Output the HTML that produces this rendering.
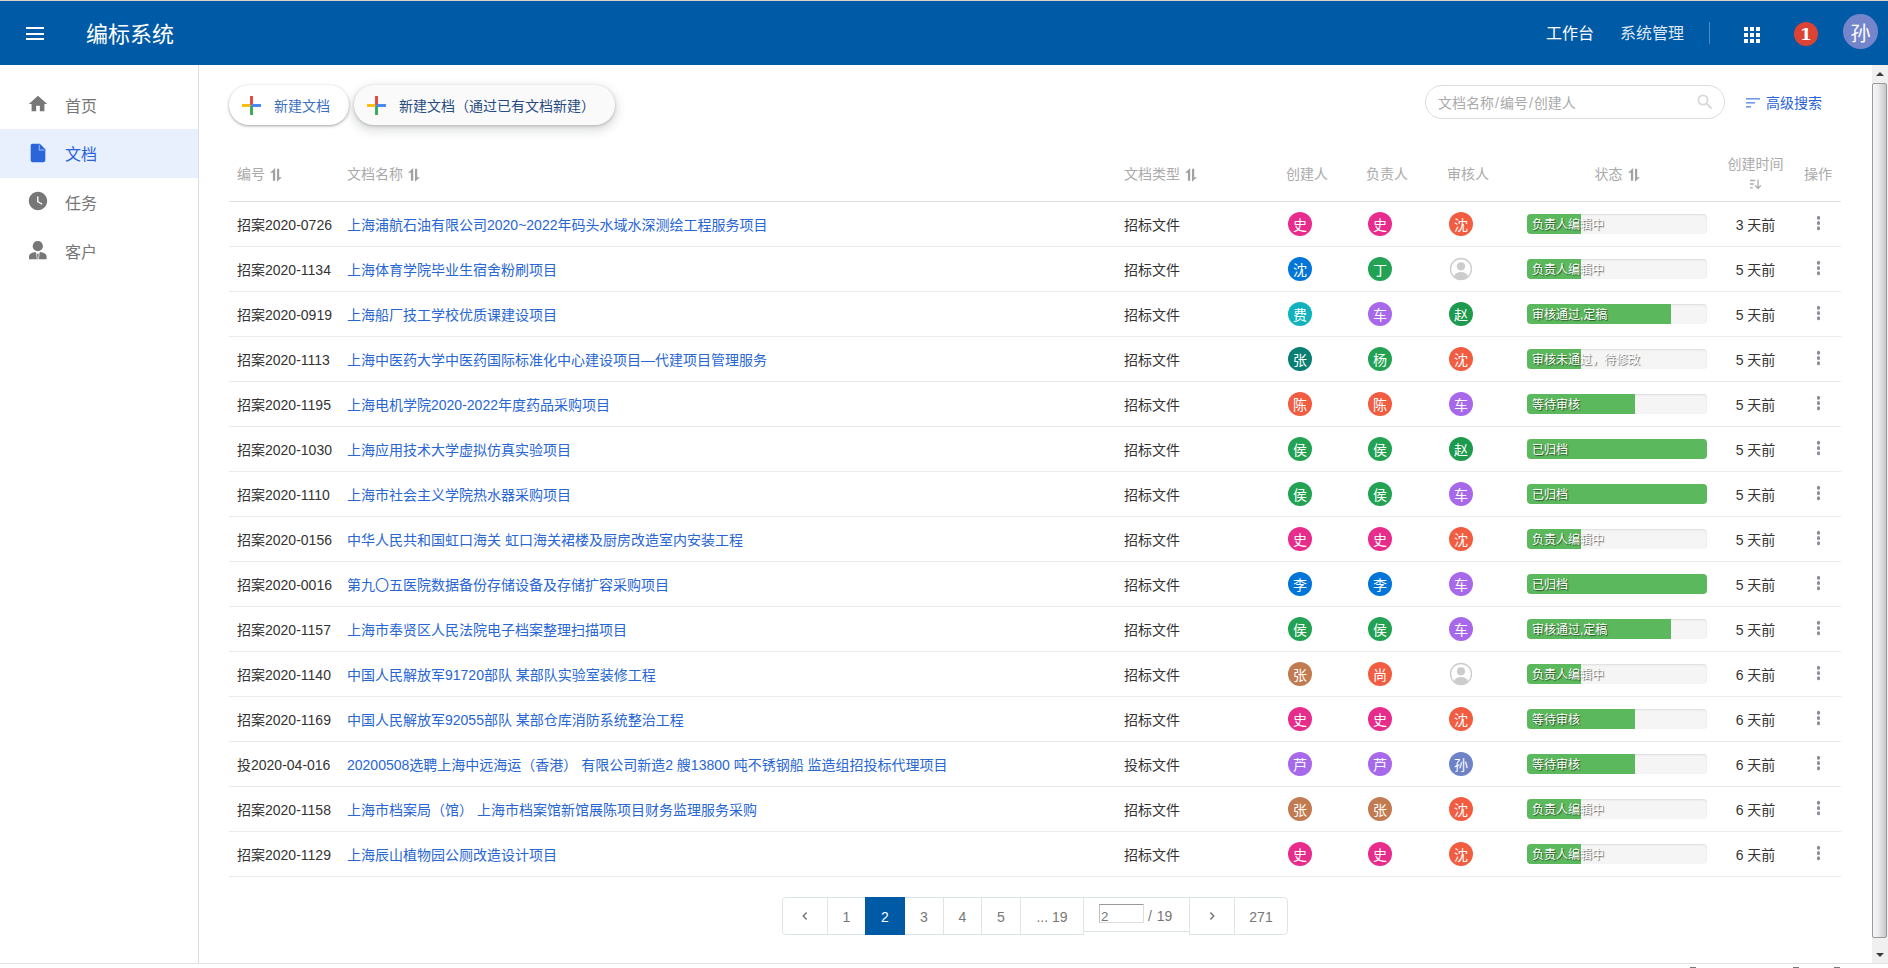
<!DOCTYPE html>
<html lang="zh-CN">
<head>
<meta charset="utf-8">
<title>编标系统</title>
<style>
*{box-sizing:border-box}
html,body{margin:0;padding:0}
body{width:1888px;height:968px;overflow:hidden;position:relative;background:#fff;font-family:"Liberation Sans","Noto Sans CJK SC",sans-serif;font-size:14px;color:#333;line-height:20px}
a{text-decoration:none;color:#2866d4}
.topline{position:absolute;left:0;top:0;width:1888px;height:1px;background:#d8d0c6;z-index:5}
.hdr{position:absolute;left:0;top:0;width:1888px;height:65px;background:#005aa6;color:#fff}
.burger{position:absolute;left:26px;top:27px;width:18px;height:13px}
.burger i{display:block;height:2px;background:#fff;margin-bottom:3.5px}
.title{position:absolute;left:86px;top:18px;font-size:22px;line-height:34px;white-space:nowrap}
.nav1{position:absolute;left:1546px;top:22px;font-size:16px;line-height:24px}
.nav2{position:absolute;left:1620px;top:22px;font-size:16px;line-height:24px;color:rgba(255,255,255,.88)}
.vdiv{position:absolute;left:1709px;top:22px;width:1px;height:22px;background:rgba(255,255,255,.3)}
.grid{position:absolute;left:1744px;top:27px;width:16px;height:16px}
.badge{position:absolute;left:1794px;top:22px;width:24px;height:24px;border-radius:50%;background:#dc4334;color:#fff;font-weight:bold;font-family:"DejaVu Serif","Liberation Serif",serif;font-size:17px;line-height:24px;text-align:center}
.me{position:absolute;left:1843px;top:14px;width:35px;height:35px;border-radius:50%;background:#7585cc;color:#fff;font-size:20px;line-height:40px;text-align:center}
.side{position:absolute;left:0;top:65px;width:199px;height:898px;border-right:1px solid #ddd;background:#fff}
.side .it{position:absolute;left:0;width:198px;height:49px;font-size:16px;line-height:49px;color:#777}
.side .it span{position:absolute;left:65px;top:1px}
.side .it svg{position:absolute;left:27px;top:13px}
.side .it.on{background:#e8f0fe;color:#2a63d6}
.bl1{position:absolute;top:967px;width:6px;height:1px;background:#777}
.botline{position:absolute;left:0;top:963px;width:1888px;height:1px;background:#e4e4e4}
.sb{position:absolute;left:1872px;top:65px;width:16px;height:898px;background:#f0f0f0}
.sb .th{position:absolute;left:0;top:18px;width:15px;height:855px;border:1px solid #9a9a9a;border-radius:2px;background:linear-gradient(90deg,#f6f6f6 0,#ececee 40%,#c6c6ca 100%)}
.sb .up{position:absolute;left:4px;top:7px;width:0;height:0;border:4px solid transparent;border-top:0;border-bottom:4px solid #3a3a3a}
.sb .dn{position:absolute;left:4px;top:888px;width:0;height:0;border:4px solid transparent;border-bottom:0;border-top:4px solid #3a3a3a}
.btn{position:absolute;top:85px;height:40px;border-radius:20px;background:#fff;box-shadow:0 1px 2px rgba(60,64,67,.3),0 1px 3px 1px rgba(60,64,67,.15);font-size:14px;line-height:40px;white-space:nowrap}
.btn svg{position:absolute;left:13px;top:11px}
.btn span{position:absolute;left:45px;top:1px}
.b1{left:229px;width:120px;color:#3d6fbe}
.b2{left:354px;width:261px;color:#284b80;background:#fafafb;box-shadow:0 1px 3px rgba(60,64,67,.3),0 4px 8px 3px rgba(60,64,67,.15)}
.search{position:absolute;left:1425px;top:85px;width:300px;height:34px;border:1px solid #ddd;border-radius:17px;color:#aaa;font-size:14px;line-height:34px;padding-left:12px}
.search b{font-weight:normal;padding:0 1px}
.search svg{position:absolute;left:271px;top:8px}
.adv{position:absolute;left:1746px;top:93px;color:#2b62d9;font-size:14px;line-height:20px;white-space:nowrap}
.adv svg{position:absolute;left:0;top:5px}
.adv span{position:absolute;left:20px;top:0}
table{position:absolute;left:229px;top:146px;width:1612px;border-collapse:collapse;table-layout:fixed}
th{height:55px;padding:2px 8px 0;font-weight:normal;color:#aaa;text-align:left;border-bottom:1px solid #dde0e6;vertical-align:middle;white-space:nowrap}
td{height:45px;padding:2px 8px 0;border-bottom:1px solid #ebebeb;vertical-align:middle;white-space:nowrap;overflow:hidden}
th svg.st{vertical-align:-3px;margin-left:5px}
.c7h,.c8h{text-align:center}
td.c8{text-align:center}
td.c9{text-align:center}
.av{position:relative;top:-1px;display:inline-block;width:24px;height:24px;border-radius:50%;color:#fff;font-size:14px;line-height:26px;text-align:center;vertical-align:middle;margin-left:2px}
.av.none{background:none}
.av svg{display:block}
.pk{background:#e82c8c}.or{background:#f25c40}.bl{background:#0275d8}.gr{background:#23a254}.dg{background:#1e9a4e}
.tl{background:#0fb2bd}.pu{background:#a768ea}.dt{background:#087f72}.br{background:#c27a50}.sb2{background:#6e82c8}
.pg{position:relative;top:-1px;width:180px;height:20px;background:#f5f5f5;border-radius:4px;box-shadow:inset 0 1px 2px rgba(0,0,0,.1);overflow:hidden}
.pb{height:20px;background:#5cb85c;color:#fff;font-size:12px;line-height:23px;white-space:nowrap;text-shadow:1px 1px 1px rgba(0,0,0,.58)}
.pb span{padding-left:5px}
.dots{position:relative;top:-3px;display:inline-block;width:3.600px;height:3.600px;border-radius:50%;background:#8c8c9c;box-shadow:0 -5.200px 0 #8c8c9c,0 5.200px 0 #8c8c9c;vertical-align:middle}
.pgn{position:absolute;left:782px;top:897px;height:38px;color:#777;font-size:14px;line-height:20px}
.pc{position:absolute;top:0;height:38px;border:1px solid #dee5e7;background:#fff;text-align:center;padding-top:9px;white-space:nowrap}
.pc.first{border-radius:4px 0 0 4px}.pc.last{border-radius:0 4px 4px 0}
.pc.on{background:#005aa6;border-color:#005aa6;color:#fff;z-index:2}
.pc svg{display:block;margin:5px auto 0}
.pc.inp{height:35px;padding:0}
.ibox{position:absolute;left:15px;top:6px;width:45px;height:19px;border:1px solid #ddd;border-top-color:#999;border-left-color:#c0c0c0;font-size:13.300px;line-height:23px;text-align:left;padding-left:1px;color:#777;overflow:hidden}
.itxt{position:absolute;left:64px;top:8px;word-spacing:1px}
</style>
</head>
<body>
<div class="hdr">
  <div class="burger"><i></i><i></i><i></i></div>
  <div class="title">编标系统</div>
  <div class="nav1">工作台</div>
  <div class="nav2">系统管理</div>
  <div class="vdiv"></div>
  <svg class="grid" viewBox="0 0 16 16"><g fill="#fff"><rect x="0" y="0" width="4" height="4"/><rect x="6" y="0" width="4" height="4"/><rect x="12" y="0" width="4" height="4"/><rect x="0" y="6" width="4" height="4"/><rect x="6" y="6" width="4" height="4"/><rect x="12" y="6" width="4" height="4"/><rect x="0" y="12" width="4" height="4"/><rect x="6" y="12" width="4" height="4"/><rect x="12" y="12" width="4" height="4"/></g></svg>
  <div class="badge">1</div>
  <div class="me">孙</div>
</div>
<div class="topline"></div>
<div class="side">
  <div class="it" style="top:16px"><svg style="top:12.300px" width="22" height="22" viewBox="0 0 24 24"><path fill="#777" d="M10 20v-6h4v6h5v-8h3L12 3 2 12h3v8z"/></svg><span>首页</span></div>
  <div class="it on" style="top:64px"><svg width="22" height="22" viewBox="0 0 24 24"><path fill="#2a66d9" d="M6 2c-1.100 0-2 .900-2 2v16c0 1.100.900 2 2 2h12c1.100 0 2-.900 2-2V8l-6-6H6z"/><path d="M13.400 3v5.600H19" fill="none" stroke="#9dbcf3" stroke-width="1.100"/></svg><span>文档</span></div>
  <div class="it" style="top:113px"><svg style="top:12.400px" width="22" height="22" viewBox="0 0 24 24"><path fill="#777" d="M12 2C6.500 2 2 6.500 2 12s4.500 10 10 10 10-4.500 10-10S17.500 2 12 2zm4.200 14.200L11 13V7h1.500v5.200l4.500 2.700-.8 1.300z"/></svg><span>任务</span></div>
  <div class="it" style="top:162px"><svg style="top:11px" width="22" height="24" viewBox="0 0 22 24"><circle cx="10.800" cy="8.200" r="5.100" fill="#777"/><path fill="#777" d="M2 21.200V18.600C2 15.900 5.400 14.500 8.300 14.100L10.800 16.200L13.300 14.100C16.200 14.500 19.600 15.900 19.600 18.600V21.200Z"/><path d="M9.300 14.800L10.200 21.200M12.300 14.800L11.400 21.200" stroke="#fff" stroke-width=".700" fill="none"/></svg><span>客户</span></div>
</div>
<div class="btn b1"><svg width="19" height="19" viewBox="0 0 20 20"><rect x="8.500" y="0" width="3" height="10" fill="#ea4335"/><rect x="8.500" y="10" width="3" height="10" fill="#34a853"/><rect x="0" y="8.500" width="8.500" height="3" fill="#fbbc05"/><rect x="10" y="8.500" width="10" height="3" fill="#4285f4"/></svg><span>新建文档</span></div>
<div class="btn b2"><svg width="19" height="19" viewBox="0 0 20 20"><rect x="8.500" y="0" width="3" height="10" fill="#ea4335"/><rect x="8.500" y="10" width="3" height="10" fill="#34a853"/><rect x="0" y="8.500" width="8.500" height="3" fill="#fbbc05"/><rect x="10" y="8.500" width="10" height="3" fill="#4285f4"/></svg><span>新建文档（通过已有文档新建）</span></div>
<div class="search">文档名称<b>/</b>编号<b>/</b>创建人<svg width="16" height="16" viewBox="0 0 16 16"><g fill="none" stroke="#d8d8d8" stroke-width="1.800"><circle cx="6" cy="6" r="4.600"/><path d="M9.400 9.400L14.500 14.500"/></g></svg></div>
<div class="adv"><svg width="14" height="10" viewBox="0 0 14 10"><g fill="#6f9af0"><rect x="0" y="0" width="14" height="1.600"/><rect x="0" y="4" width="9" height="1.600"/><rect x="0" y="8" width="5" height="1.600"/></g></svg><span>高级搜索</span></div>
<table>
<colgroup><col style="width:110px"><col style="width:777px"><col style="width:162px"><col style="width:80px"><col style="width:81px"><col style="width:80px"><col style="width:196px"><col style="width:81px"><col style="width:45px"></colgroup>
<thead><tr>
<th>编号<svg class="st" width="12" height="14" viewBox="0 0 12 14"><g fill="#a2a2a2"><path d="M5.200 0L0 4.700H2.900V12.700H5.200z"/><path d="M7 0.800H9.200V9.200H11.900L7 13.700z"/></g></svg></th>
<th>文档名称<svg class="st" width="12" height="14" viewBox="0 0 12 14"><g fill="#a2a2a2"><path d="M5.200 0L0 4.700H2.900V12.700H5.200z"/><path d="M7 0.800H9.200V9.200H11.900L7 13.700z"/></g></svg></th>
<th>文档类型<svg class="st" width="12" height="14" viewBox="0 0 12 14"><g fill="#a2a2a2"><path d="M5.200 0L0 4.700H2.900V12.700H5.200z"/><path d="M7 0.800H9.200V9.200H11.900L7 13.700z"/></g></svg></th>
<th>创建人</th><th>负责人</th><th>审核人</th>
<th class="c7h">状态<svg class="st" width="12" height="14" viewBox="0 0 12 14"><g fill="#a2a2a2"><path d="M5.200 0L0 4.700H2.900V12.700H5.200z"/><path d="M7 0.800H9.200V9.200H11.900L7 13.700z"/></g></svg></th>
<th class="c8h">创建时间<br><svg width="11" height="10" viewBox="0 0 11 10"><g fill="none" stroke="#adadad" stroke-width="1.300"><path d="M0 1.500h5.200M0 5h3.800M0 8.800h2.800M8 0.500v9M5.200 6.400L8 9.500l2.800-3.100"/></g></svg></th>
<th>操作</th>
</tr></thead>
<tbody>
<tr><td class="c1">招案2020-0726</td><td class="c2"><a>上海浦航石油有限公司2020~2022年码头水域水深测绘工程服务项目</a></td><td class="c3">招标文件</td><td class="c4"><span class="av pk">史</span></td><td class="c5"><span class="av pk">史</span></td><td class="c6"><span class="av or">沈</span></td><td class="c7"><div class="pg"><div class="pb" style="width:30%"><span>负责人编辑中</span></div></div></td><td class="c8">3 天前</td><td class="c9"><i class="dots"></i></td></tr>
<tr><td class="c1">招案2020-1134</td><td class="c2"><a>上海体育学院毕业生宿舍粉刷项目</a></td><td class="c3">招标文件</td><td class="c4"><span class="av bl">沈</span></td><td class="c5"><span class="av gr">丁</span></td><td class="c6"><span class="av none"><svg viewBox="0 0 24 24" width="24" height="24"><circle cx="12" cy="12" r="10.500" fill="#fff" stroke="#ccc" stroke-width="1.300"/><circle cx="12" cy="9.3" r="4.1" fill="#ccc"/><path d="M5 19.400c1.200-3 3.800-4.300 7-4.300s5.800 1.300 7 4.300A10.200 10.200 0 0 1 12 22.200 10.200 10.200 0 0 1 5 19.400z" fill="#ccc"/></svg></span></td><td class="c7"><div class="pg"><div class="pb" style="width:30%"><span>负责人编辑中</span></div></div></td><td class="c8">5 天前</td><td class="c9"><i class="dots"></i></td></tr>
<tr><td class="c1">招案2020-0919</td><td class="c2"><a>上海船厂技工学校优质课建设项目</a></td><td class="c3">招标文件</td><td class="c4"><span class="av tl">费</span></td><td class="c5"><span class="av pu">车</span></td><td class="c6"><span class="av dg">赵</span></td><td class="c7"><div class="pg"><div class="pb" style="width:80%"><span>审核通过,定稿</span></div></div></td><td class="c8">5 天前</td><td class="c9"><i class="dots"></i></td></tr>
<tr><td class="c1">招案2020-1113</td><td class="c2"><a>上海中医药大学中医药国际标准化中心建设项目—代建项目管理服务</a></td><td class="c3">招标文件</td><td class="c4"><span class="av dt">张</span></td><td class="c5"><span class="av gr">杨</span></td><td class="c6"><span class="av or">沈</span></td><td class="c7"><div class="pg"><div class="pb" style="width:30%"><span>审核未通过，待修改</span></div></div></td><td class="c8">5 天前</td><td class="c9"><i class="dots"></i></td></tr>
<tr><td class="c1">招案2020-1195</td><td class="c2"><a>上海电机学院2020-2022年度药品采购项目</a></td><td class="c3">招标文件</td><td class="c4"><span class="av or">陈</span></td><td class="c5"><span class="av or">陈</span></td><td class="c6"><span class="av pu">车</span></td><td class="c7"><div class="pg"><div class="pb" style="width:60%"><span>等待审核</span></div></div></td><td class="c8">5 天前</td><td class="c9"><i class="dots"></i></td></tr>
<tr><td class="c1">招案2020-1030</td><td class="c2"><a>上海应用技术大学虚拟仿真实验项目</a></td><td class="c3">招标文件</td><td class="c4"><span class="av gr">侯</span></td><td class="c5"><span class="av gr">侯</span></td><td class="c6"><span class="av dg">赵</span></td><td class="c7"><div class="pg"><div class="pb" style="width:100%"><span>已归档</span></div></div></td><td class="c8">5 天前</td><td class="c9"><i class="dots"></i></td></tr>
<tr><td class="c1">招案2020-1110</td><td class="c2"><a>上海市社会主义学院热水器采购项目</a></td><td class="c3">招标文件</td><td class="c4"><span class="av gr">侯</span></td><td class="c5"><span class="av gr">侯</span></td><td class="c6"><span class="av pu">车</span></td><td class="c7"><div class="pg"><div class="pb" style="width:100%"><span>已归档</span></div></div></td><td class="c8">5 天前</td><td class="c9"><i class="dots"></i></td></tr>
<tr><td class="c1">招案2020-0156</td><td class="c2"><a>中华人民共和国虹口海关 虹口海关裙楼及厨房改造室内安装工程</a></td><td class="c3">招标文件</td><td class="c4"><span class="av pk">史</span></td><td class="c5"><span class="av pk">史</span></td><td class="c6"><span class="av or">沈</span></td><td class="c7"><div class="pg"><div class="pb" style="width:30%"><span>负责人编辑中</span></div></div></td><td class="c8">5 天前</td><td class="c9"><i class="dots"></i></td></tr>
<tr><td class="c1">招案2020-0016</td><td class="c2"><a>第九〇五医院数据备份存储设备及存储扩容采购项目</a></td><td class="c3">招标文件</td><td class="c4"><span class="av bl">李</span></td><td class="c5"><span class="av bl">李</span></td><td class="c6"><span class="av pu">车</span></td><td class="c7"><div class="pg"><div class="pb" style="width:100%"><span>已归档</span></div></div></td><td class="c8">5 天前</td><td class="c9"><i class="dots"></i></td></tr>
<tr><td class="c1">招案2020-1157</td><td class="c2"><a>上海市奉贤区人民法院电子档案整理扫描项目</a></td><td class="c3">招标文件</td><td class="c4"><span class="av gr">侯</span></td><td class="c5"><span class="av gr">侯</span></td><td class="c6"><span class="av pu">车</span></td><td class="c7"><div class="pg"><div class="pb" style="width:80%"><span>审核通过,定稿</span></div></div></td><td class="c8">5 天前</td><td class="c9"><i class="dots"></i></td></tr>
<tr><td class="c1">招案2020-1140</td><td class="c2"><a>中国人民解放军91720部队 某部队实验室装修工程</a></td><td class="c3">招标文件</td><td class="c4"><span class="av br">张</span></td><td class="c5"><span class="av or">尚</span></td><td class="c6"><span class="av none"><svg viewBox="0 0 24 24" width="24" height="24"><circle cx="12" cy="12" r="10.500" fill="#fff" stroke="#ccc" stroke-width="1.300"/><circle cx="12" cy="9.3" r="4.1" fill="#ccc"/><path d="M5 19.400c1.200-3 3.800-4.300 7-4.300s5.800 1.300 7 4.300A10.200 10.200 0 0 1 12 22.200 10.200 10.200 0 0 1 5 19.400z" fill="#ccc"/></svg></span></td><td class="c7"><div class="pg"><div class="pb" style="width:30%"><span>负责人编辑中</span></div></div></td><td class="c8">6 天前</td><td class="c9"><i class="dots"></i></td></tr>
<tr><td class="c1">招案2020-1169</td><td class="c2"><a>中国人民解放军92055部队 某部仓库消防系统整治工程</a></td><td class="c3">招标文件</td><td class="c4"><span class="av pk">史</span></td><td class="c5"><span class="av pk">史</span></td><td class="c6"><span class="av or">沈</span></td><td class="c7"><div class="pg"><div class="pb" style="width:60%"><span>等待审核</span></div></div></td><td class="c8">6 天前</td><td class="c9"><i class="dots"></i></td></tr>
<tr><td class="c1">投2020-04-016</td><td class="c2"><a>20200508选聘上海中远海运（香港） 有限公司新造2 艘13800 吨不锈钢船 监造组招投标代理项目</a></td><td class="c3">投标文件</td><td class="c4"><span class="av pu">芦</span></td><td class="c5"><span class="av pu">芦</span></td><td class="c6"><span class="av sb2">孙</span></td><td class="c7"><div class="pg"><div class="pb" style="width:60%"><span>等待审核</span></div></div></td><td class="c8">6 天前</td><td class="c9"><i class="dots"></i></td></tr>
<tr><td class="c1">招案2020-1158</td><td class="c2"><a>上海市档案局（馆） 上海市档案馆新馆展陈项目财务监理服务采购</a></td><td class="c3">招标文件</td><td class="c4"><span class="av br">张</span></td><td class="c5"><span class="av br">张</span></td><td class="c6"><span class="av or">沈</span></td><td class="c7"><div class="pg"><div class="pb" style="width:30%"><span>负责人编辑中</span></div></div></td><td class="c8">6 天前</td><td class="c9"><i class="dots"></i></td></tr>
<tr><td class="c1">招案2020-1129</td><td class="c2"><a>上海辰山植物园公厕改造设计项目</a></td><td class="c3">招标文件</td><td class="c4"><span class="av pk">史</span></td><td class="c5"><span class="av pk">史</span></td><td class="c6"><span class="av or">沈</span></td><td class="c7"><div class="pg"><div class="pb" style="width:30%"><span>负责人编辑中</span></div></div></td><td class="c8">6 天前</td><td class="c9"><i class="dots"></i></td></tr>
</tbody>
</table>
<div class="pgn"><div class="pc first" style="left:0px;width:46px"><svg width="6" height="9" viewBox="0 0 6 9"><path d="M4.600 0.600L1.300 4L4.600 7.400" fill="none" stroke="#777" stroke-width="1.500"/></svg></div><div class="pc" style="left:45px;width:39px">1</div><div class="pc on" style="left:83px;width:40px">2</div><div class="pc" style="left:122px;width:40px">3</div><div class="pc" style="left:161px;width:39px">4</div><div class="pc" style="left:199px;width:40px">5</div><div class="pc" style="left:238px;width:64px">... 19</div><div class="pc inp" style="left:301px;width:107px"><span class="ibox">2</span><span class="itxt">/ 19</span></div><div class="pc" style="left:407px;width:46px"><svg width="6" height="9" viewBox="0 0 6 9"><path d="M1.400 0.600L4.700 4L1.400 7.400" fill="none" stroke="#777" stroke-width="1.500"/></svg></div><div class="pc last" style="left:452px;width:54px">271</div></div>
<div class="botline"></div><i class="bl1" style="left:1690px"></i><i class="bl1" style="left:1793px"></i><i class="bl1" style="left:1834px"></i>
<div class="sb"><i class="up"></i><div class="th"></div><i class="dn"></i></div>
</body>
</html>
